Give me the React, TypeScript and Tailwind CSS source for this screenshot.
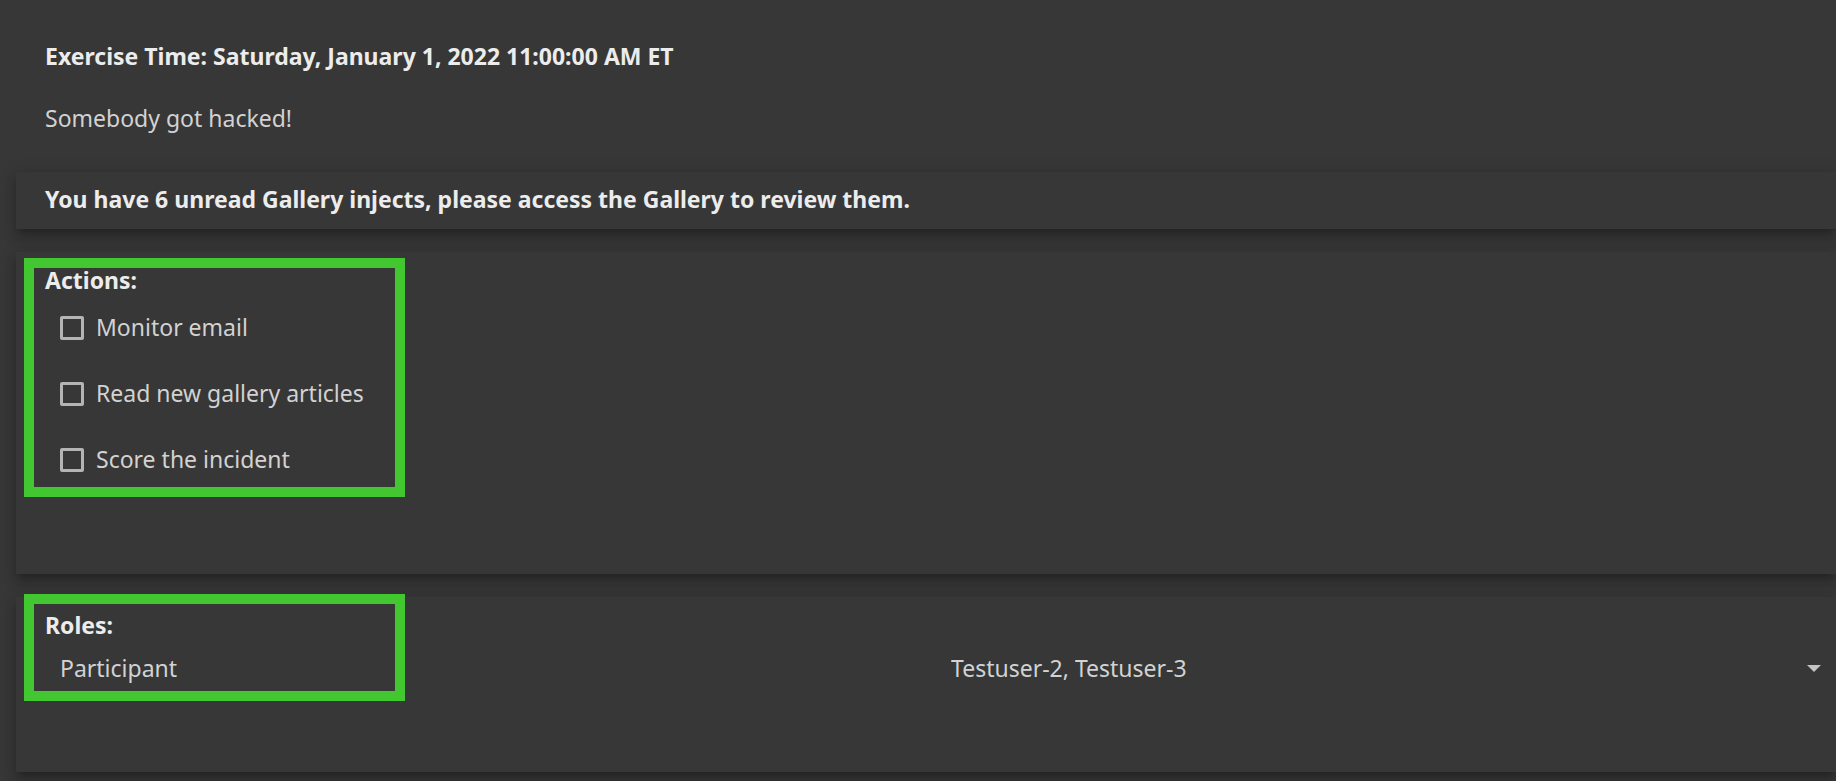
import { useState } from "react";

const cardShadow =
  "shadow-[0_6px_6px_-4px_rgba(0,0,0,0.2),0_9px_11px_1px_rgba(0,0,0,0.14),0_3px_16px_2px_rgba(0,0,0,0.12)]";

const actions = ["Monitor email", "Read new gallery articles", "Score the incident"];

function Highlight({ className }: { className: string }) {
  return (
    <div
      aria-hidden="true"
      className={`pointer-events-none absolute left-2 w-[381px] border-10 border-[#43c731] ${className}`}
    />
  );
}

function ActionItem({ label }: { label: string }) {
  const [done, setDone] = useState(false);
  return (
    <label className="flex h-8 items-center gap-3">
      <input
        type="checkbox"
        checked={done}
        onChange={(e) => setDone(e.target.checked)}
        className="size-6 appearance-none rounded-[2px] border-3 border-[#b4b4b4] checked:bg-[#b4b4b4]"
      />
      <span className="pb-0.5">{label}</span>
    </label>
  );
}

export default function App() {
  return (
    <main className="min-h-screen overflow-hidden bg-[#373737] pb-2 pl-4 font-['Noto_Sans',sans-serif] text-[23px] leading-8 text-[#d2d2d2]">
      <header className="flex flex-col gap-[30px] pt-10 pb-[38px] pl-[29px]">
        <h1 className="font-bold text-[#ececec]">
          Exercise Time: Saturday, January 1, 2022 11:00:00 AM ET
        </h1>
        <p>Somebody got hacked!</p>
      </header>

      <div className="flex flex-col gap-[23px]">
        <section className={`bg-[#373737] pt-[11px] pb-[14px] pl-[29px] ${cardShadow}`}>
          <p className="font-bold text-[#ececec]">
            You have 6 unread Gallery injects, please access the Gallery to review them.
          </p>
        </section>

        <section className={`relative bg-[#373737] pt-3 pb-[98px] pl-[29px] ${cardShadow}`}>
          <h2 className="font-bold text-[#ececec]">Actions:</h2>
          <div className="flex flex-col gap-[34px] pt-4 pl-[15px]">
            {actions.map((label) => (
              <ActionItem key={label} label={label} />
            ))}
          </div>
          <Highlight className="top-[6px] h-[239px]" />
        </section>

        <section className={`relative bg-[#373737] pt-3 pb-[88px] pl-[29px] ${cardShadow}`}>
          <h2 className="font-bold text-[#ececec]">Roles:</h2>
          <div className="grid grid-cols-2 items-center pt-[11px] pl-[15px]">
            <label htmlFor="participants">Participant</label>
            <div className="relative flex items-center pl-[3px]">
              <select
                id="participants"
                className="h-8 w-full appearance-none bg-transparent p-0 outline-none"
              >
                <option>Testuser-2, Testuser-3</option>
              </select>
              <svg
                viewBox="0 0 14 8"
                className="pointer-events-none absolute right-[15px] h-2 w-[14px] fill-[#c4c4c4]"
                aria-hidden="true"
              >
                <path d="M0 1h14L7 8z" />
              </svg>
            </div>
          </div>
          <Highlight className="-top-[3px] h-[107px]" />
        </section>
      </div>
    </main>
  );
}
